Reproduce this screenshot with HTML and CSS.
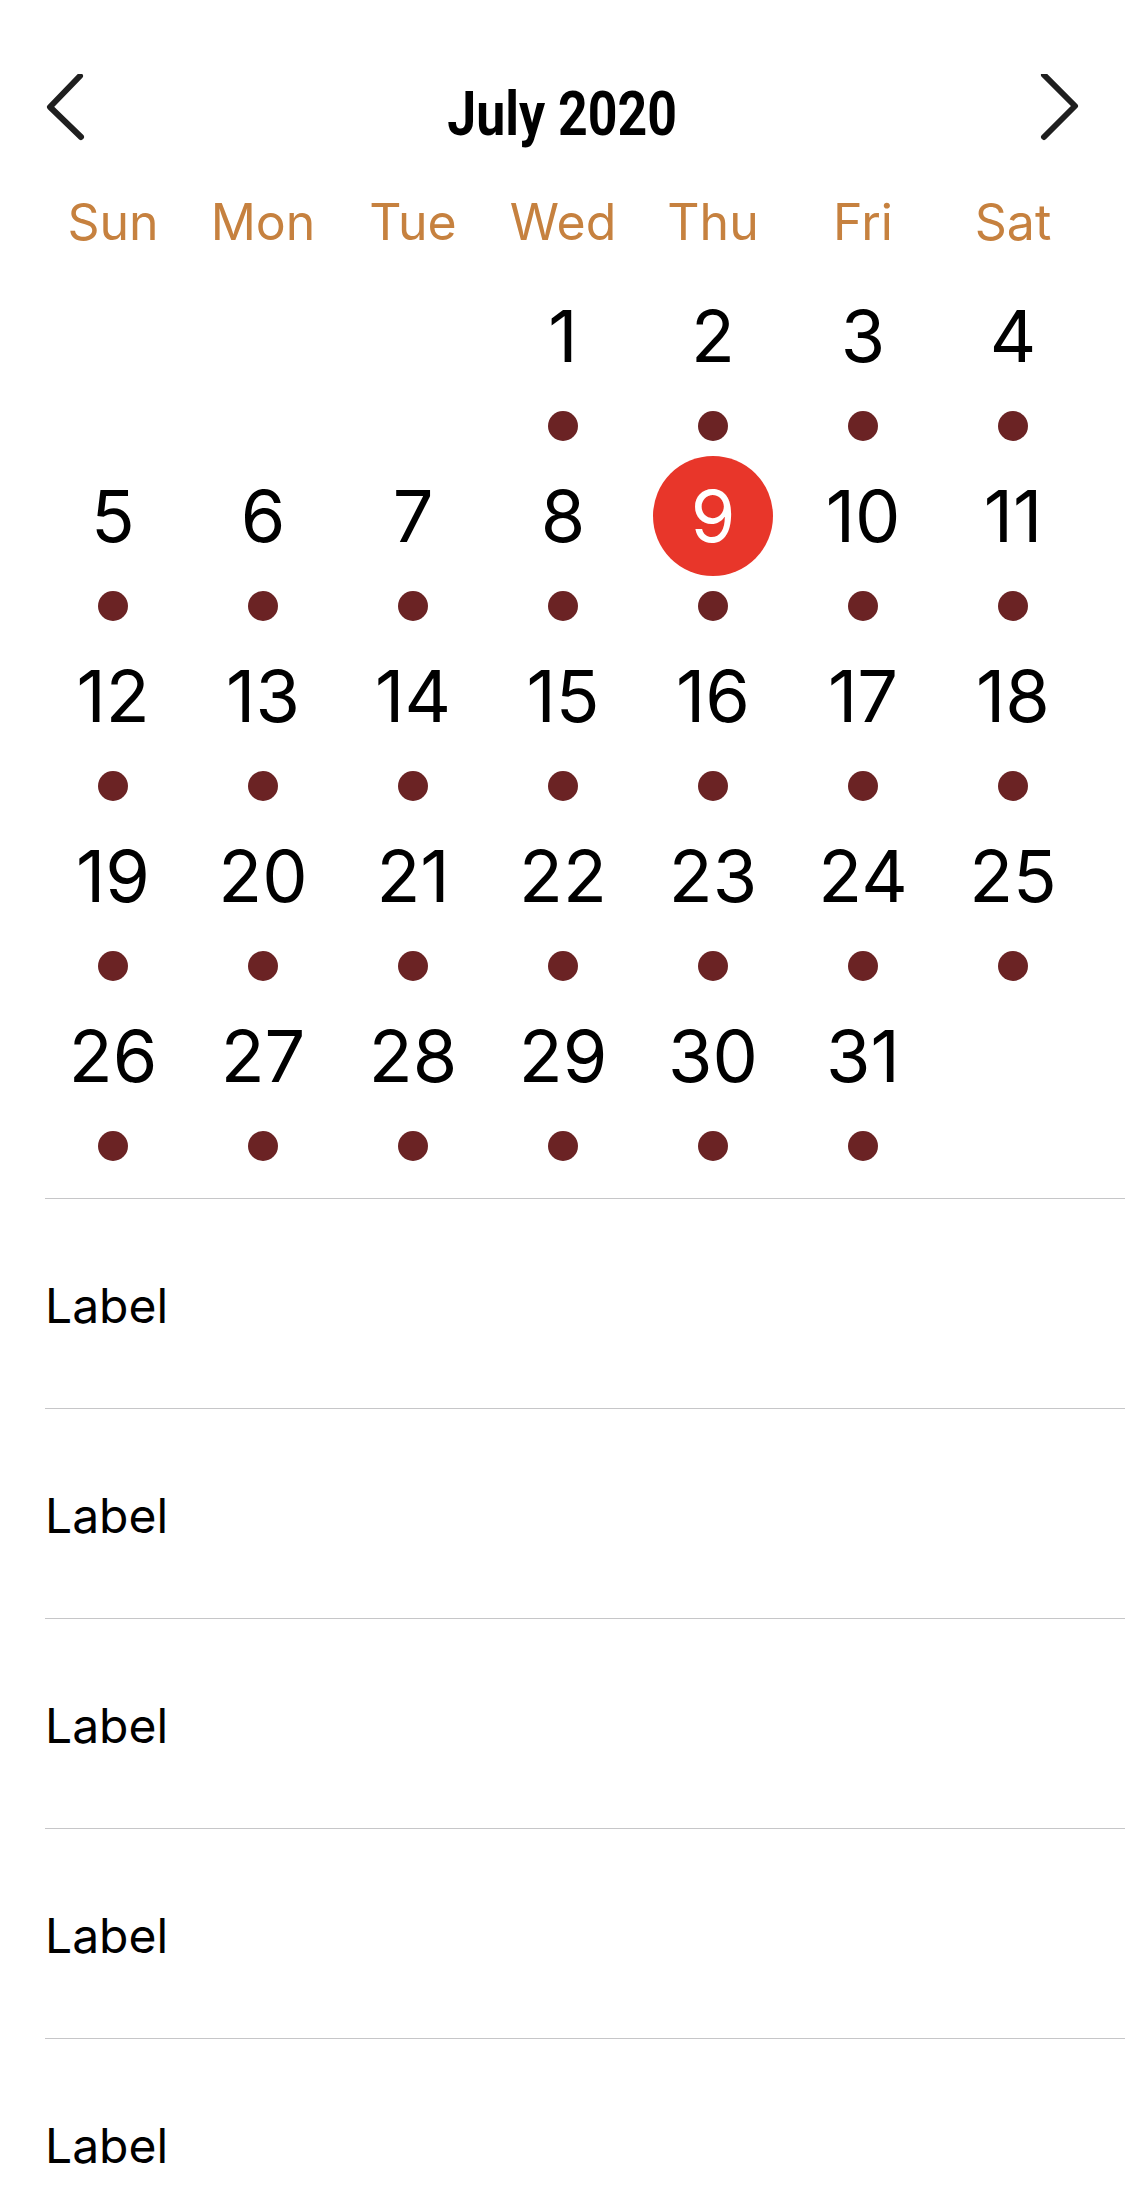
FILE: index.html
```html
<!DOCTYPE html>
<html lang="en">
<head>
<meta charset="utf-8">
<title>Calendar</title>
<link rel="stylesheet" href="styles.css">
</head>
<body>
<div class="screen">
  <header class="header">
    <svg class="chev" width="40" height="80" viewBox="0 0 40 80" aria-hidden="true">
      <polyline points="35,2 5,33 36,63" />
    </svg>
    <h1 class="title"><span>July 2020</span></h1>
    <svg class="chev" width="40" height="80" viewBox="0 0 40 80" aria-hidden="true">
      <polyline points="4,1 35,32 4,63" />
    </svg>
  </header>

  <div class="weekdays">
    <div>Sun</div><div>Mon</div><div>Tue</div><div>Wed</div><div>Thu</div><div>Fri</div><div>Sat</div>
  </div>

  <div class="days">
    <div class="cell empty"></div>
    <div class="cell empty"></div>
    <div class="cell empty"></div>
    <div class="cell"><span class="num">1</span><span class="dot"></span></div>
    <div class="cell"><span class="num">2</span><span class="dot"></span></div>
    <div class="cell"><span class="num">3</span><span class="dot"></span></div>
    <div class="cell"><span class="num">4</span><span class="dot"></span></div>

    <div class="cell"><span class="num">5</span><span class="dot"></span></div>
    <div class="cell"><span class="num">6</span><span class="dot"></span></div>
    <div class="cell"><span class="num">7</span><span class="dot"></span></div>
    <div class="cell"><span class="num">8</span><span class="dot"></span></div>
    <div class="cell today"><span class="num">9</span><span class="dot"></span></div>
    <div class="cell"><span class="num">10</span><span class="dot"></span></div>
    <div class="cell"><span class="num">11</span><span class="dot"></span></div>

    <div class="cell"><span class="num">12</span><span class="dot"></span></div>
    <div class="cell"><span class="num">13</span><span class="dot"></span></div>
    <div class="cell"><span class="num">14</span><span class="dot"></span></div>
    <div class="cell"><span class="num">15</span><span class="dot"></span></div>
    <div class="cell"><span class="num">16</span><span class="dot"></span></div>
    <div class="cell"><span class="num">17</span><span class="dot"></span></div>
    <div class="cell"><span class="num">18</span><span class="dot"></span></div>

    <div class="cell"><span class="num">19</span><span class="dot"></span></div>
    <div class="cell"><span class="num">20</span><span class="dot"></span></div>
    <div class="cell"><span class="num">21</span><span class="dot"></span></div>
    <div class="cell"><span class="num">22</span><span class="dot"></span></div>
    <div class="cell"><span class="num">23</span><span class="dot"></span></div>
    <div class="cell"><span class="num">24</span><span class="dot"></span></div>
    <div class="cell"><span class="num">25</span><span class="dot"></span></div>

    <div class="cell"><span class="num">26</span><span class="dot"></span></div>
    <div class="cell"><span class="num">27</span><span class="dot"></span></div>
    <div class="cell"><span class="num">28</span><span class="dot"></span></div>
    <div class="cell"><span class="num">29</span><span class="dot"></span></div>
    <div class="cell"><span class="num">30</span><span class="dot"></span></div>
    <div class="cell"><span class="num">31</span><span class="dot"></span></div>
    <div class="cell empty"></div>
  </div>

  <ul class="list">
    <li class="row">Label</li>
    <li class="row">Label</li>
    <li class="row">Label</li>
    <li class="row">Label</li>
    <li class="row">Label</li>
  </ul>
</div>
</body>
</html>
```

FILE: styles.css
```css
* {
  box-sizing: border-box;
}

html, body {
  margin: 0;
  padding: 0;
  background: #ffffff;
}

body {
  font-family: Inter, "Noto Sans", "Liberation Sans", sans-serif;
  color: #000000;
  overflow: hidden;
}

.screen {
  width: 1125px;
  height: 2202px;
  overflow: hidden;
}

/* Header */
.header {
  margin-top: 54px;
  height: 120px;
  padding: 0 45px;
  display: flex;
  align-items: center;
  justify-content: space-between;
}

.chev {
  display: block;
  flex: none;
}

.chev polyline {
  fill: none;
  stroke: #1f1f1f;
  stroke-width: 6;
  stroke-linecap: round;
  stroke-linejoin: round;
}

.title {
  margin: 0;
  font-family: Roboto, "Liberation Sans", sans-serif;
  font-weight: 700;
  font-size: 61px;
  line-height: 1;
  color: #000000;
  text-align: center;
  flex: 1;
}

.title span {
  display: inline-block;
  transform: scaleX(0.85);
}

/* Weekday labels */
.weekdays {
  margin: 18px 37px 0 38px;
  height: 60px;
  display: grid;
  grid-template-columns: repeat(7, 150px);
  align-items: center;
  font-size: 50px;
  line-height: 1;
  color: #c6813f;
  text-align: center;
}

/* Day grid */
.days {
  margin: 24px 37px 0 38px;
  display: grid;
  grid-template-columns: repeat(7, 150px);
  grid-auto-rows: 180px;
}

.cell {
  display: flex;
  flex-direction: column;
  align-items: center;
}

.num {
  width: 120px;
  height: 120px;
  border-radius: 50%;
  display: flex;
  align-items: center;
  justify-content: center;
  font-size: 72px;
  line-height: 1;
  color: #000000;
}

.dot {
  margin-top: 15px;
  width: 30px;
  height: 30px;
  border-radius: 50%;
  background: #6b2324;
}

.today .num {
  background: #e8362a;
  color: #ffffff;
}

/* List */
.list {
  list-style: none;
  margin: 22px 0 0 45px;
  padding: 0;
}

.row {
  height: 210px;
  border-top: 1px solid #c6c6c8;
  display: flex;
  align-items: center;
  padding-top: 4px;
  font-size: 48px;
  line-height: 1;
  color: #000000;
}
```
